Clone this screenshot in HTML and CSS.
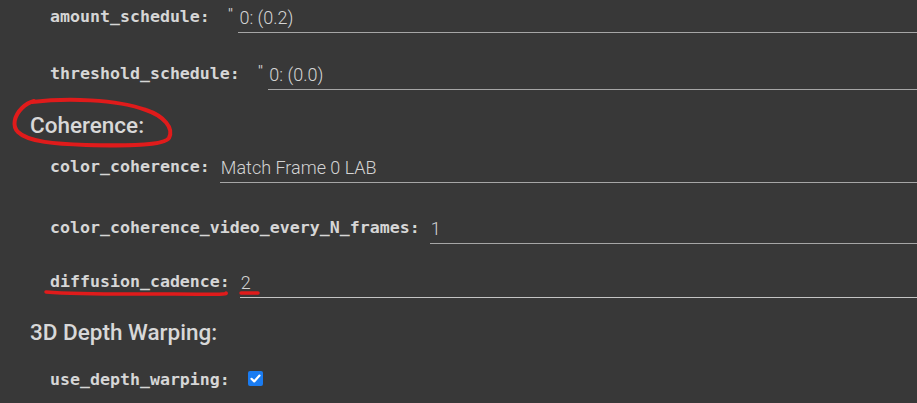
FILE: index.html
```html
<!DOCTYPE html>
<html>
<head>
<meta charset="utf-8">
<link rel="stylesheet" href="styles.css">
</head>
<body>
<div class="form">
  <div class="field f-amount">
    <span class="label">amount_schedule:</span>
    <span class="quote">"</span>
    <span class="input">0: (0.2)</span>
  </div>
  <div class="field f-threshold">
    <span class="label">threshold_schedule:</span>
    <span class="quote">"</span>
    <span class="input">0: (0.0)</span>
  </div>
  <div class="heading h-coherence">
    <span>Coherence:</span>
    <svg class="circle" width="170" height="56" viewBox="0 0 170 56">
      <path d="M26 6 C 60 2, 110 3, 140 14 C 158 20, 168 32, 163 42 C 158 50, 120 50, 80 49 C 50 48, 22 46, 12 36 C 6 30, 8 20, 16 12 C 20 8, 24 6, 28 5" fill="none" stroke="#e01b1b" stroke-width="4" stroke-linecap="round" stroke-linejoin="round"/>
    </svg>
  </div>
  <div class="field f-color">
    <span class="label">color_coherence:</span>
    <span class="input">Match Frame 0 LAB</span>
  </div>
  <div class="field f-every">
    <span class="label">color_coherence_video_every_N_frames:</span>
    <span class="input">1</span>
  </div>
  <div class="field f-cadence">
    <span class="label">diffusion_cadence:</span>
    <span class="input light">2</span>
    <svg class="marks" width="230" height="10" viewBox="0 0 230 10">
      <path d="M2 3 C 40 6, 90 5, 130 5 C 160 5, 185 6, 182 4" fill="none" stroke="#e01b1b" stroke-width="3.5" stroke-linecap="round"/>
      <path d="M197 4 L 214 4" fill="none" stroke="#e01b1b" stroke-width="3.5" stroke-linecap="round"/>
    </svg>
  </div>
  <div class="heading h-depth">
    <span>3D Depth Warping:</span>
  </div>
  <div class="field f-depth">
    <span class="label">use_depth_warping:</span>
    <span class="check">
      <svg width="15" height="15" viewBox="0 0 15 15"><path d="M3.5 7.8 L6.2 10.4 L11.5 4.6" fill="none" stroke="#fff" stroke-width="2.2" stroke-linecap="round" stroke-linejoin="round"/></svg>
    </span>
  </div>
</div>
</body>
</html>
```
FILE: styles.css
```css
html, body {
  margin: 0;
  padding: 0;
  background: #383838;
  overflow: hidden;
}
.form {
  display: flex;
  flex-direction: column;
  width: 917px;
  height: 403px;
}
.field {
  display: flex;
  align-items: flex-end;
  padding-left: 50px;
  position: relative;
  flex-shrink: 0;
}
.label {
  font-family: "DejaVu Sans Mono", monospace;
  font-weight: bold;
  font-size: 16.6px;
  line-height: 20px;
  color: #d6d6d6;
  margin-right: 10px;
  padding-bottom: 6px;
}
.quote {
  font-family: "DejaVu Sans", sans-serif;
  font-size: 12px;
  line-height: 12px;
  color: #cfcfcf;
  margin: 0 5px 14px 8px;
}
.input {
  flex: 1;
  font-family: "Roboto", sans-serif;
  font-weight: 300;
  font-size: 18px;
  line-height: 22px;
  color: #d4d4d4;
  padding: 0 0 3px 1px;
  border-bottom: 1px solid #a6a6a6;
}
.input.light {
  border-bottom-color: #c4c4c4;
}
.f-amount { height: 33px; }
.f-threshold { height: 57px; }
.heading {
  position: relative;
  flex-shrink: 0;
  padding-left: 30px;
  font-family: "Roboto", sans-serif;
  font-weight: 500;
  font-size: 22.5px;
  line-height: 26px;
  color: #d8d8d8;
}
.h-coherence { margin-top: 22px; }
.circle {
  position: absolute;
  left: 6px;
  top: -16px;
}
.f-color { height: 45px; }
.f-every { height: 61px; }
.f-cadence { height: 54px; }
.marks {
  position: absolute;
  left: 44px;
  top: 45px;
}
.h-depth { margin-top: 21px; }
.f-depth {
  height: 51px;
}
.check {
  width: 15px;
  height: 15px;
  border-radius: 2px;
  background: #1a7cf2;
  margin-left: 8px;
  margin-bottom: 10px;
  display: flex;
}
```
